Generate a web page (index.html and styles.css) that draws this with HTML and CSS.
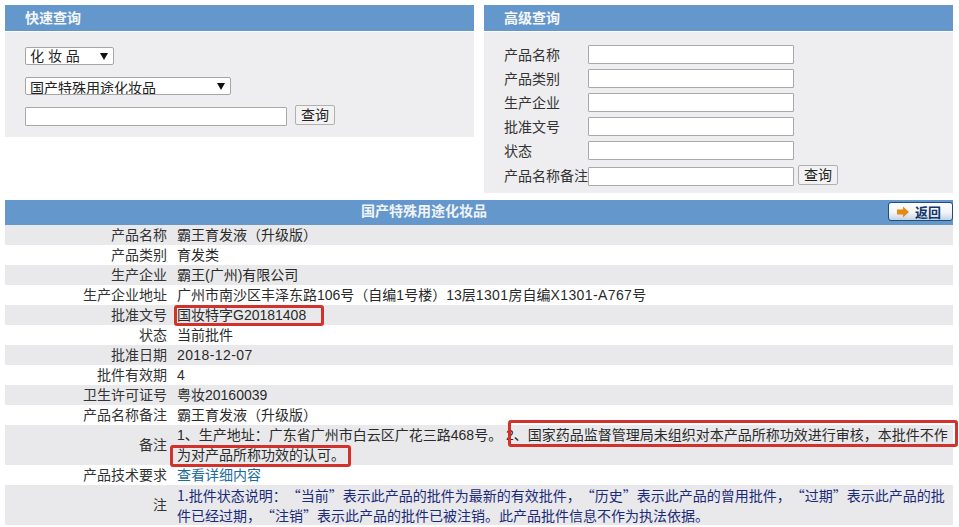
FILE: index.html
```html
<!DOCTYPE html>
<html lang="zh-CN">
  <head>
    <meta charset="UTF-8" />
    <title>国产特殊用途化妆品</title>
    <link rel="stylesheet" href="styles.css">
  </head>
  <body>
    <div class="search-panels">
      <div class="panel">
        <div class="panel-title">快速查询</div>
        <div class="panel-body quick">
          <div class="select-box small"><select><option>化 妆 品</option></select></div>
          <div class="select-box wide"><select><option>国产特殊用途化妆品</option></select></div>
          <div class="quick-row">
            <input type="text" class="text-input long" />
            <button type="button" class="query-btn">查询</button>
          </div>
        </div>
      </div>
      <div class="panel">
        <div class="panel-title">高级查询</div>
        <div class="panel-body advanced">
          <div class="form-row"><label>产品名称</label><input type="text" class="text-input" /></div>
          <div class="form-row"><label>产品类别</label><input type="text" class="text-input" /></div>
          <div class="form-row"><label>生产企业</label><input type="text" class="text-input" /></div>
          <div class="form-row"><label>批准文号</label><input type="text" class="text-input" /></div>
          <div class="form-row"><label>状态</label><input type="text" class="text-input" /></div>
          <div class="form-row last">
            <label>产品名称备注</label><input type="text" class="text-input" />
            <button type="button" class="query-btn">查询</button>
          </div>
        </div>
      </div>
    </div>

    <div class="detail-head">
      <div class="detail-title">国产特殊用途化妆品</div>
      <div class="detail-actions">
        <a class="back-btn">
          <svg width="12" height="12" viewBox="0 0 12 12">
            <path d="M0 3.500h6V0.500L12 6l-6 5.500V8.500H0z" fill="#e58a12" />
          </svg>
          返回
        </a>
      </div>
    </div>
    <table class="detail">
      <tr><th>产品名称</th><td>霸王育发液（升级版）</td></tr>
      <tr><th>产品类别</th><td>育发类</td></tr>
      <tr><th>生产企业</th><td>霸王(广州)有限公司</td></tr>
      <tr><th>生产企业地址</th><td>广州市南沙区丰泽东路106号（自编1号楼）13层<span class="digits">1301</span>房自编<span class="digits">X1301-A767</span>号</td></tr>
      <tr><th>批准文号</th><td>国妆特字G20181408</td></tr>
      <tr><th>状态</th><td>当前批件</td></tr>
      <tr><th>批准日期</th><td><span class="digits">2018-12-07</span></td></tr>
      <tr><th>批件有效期</th><td>4</td></tr>
      <tr><th>卫生许可证号</th><td>粤妆20160039</td></tr>
      <tr><th>产品名称备注</th><td>霸王育发液（升级版）</td></tr>
      <tr><th>备注</th><td>1、生产地址：广东省广州市白云区广花三路468号。 2、国家药品监督管理局未组织对本产品所称功效进行审核，本批件不作为对产品所称功效的认可。</td></tr>
      <tr><th>产品技术要求</th><td><a class="detail-link">查看详细内容</a></td></tr>
      <tr><th>注</th><td class="note">1.批件状态说明：“当前”表示此产品的批件为最新的有效批件，“历史”表示此产品的曾用批件，“过期”表示此产品的批件已经过期，“注销”表示此产品的批件已被注销。此产品批件信息不作为执法依据。</td></tr>
    </table>

    <div class="mark mark-number"></div>
    <div class="mark mark-note-a"></div>
    <div class="mark mark-note-b"></div>
  </body>
</html>
```

FILE: styles.css
```css
body {
  margin: 0;
  padding: 5px 6px 0 5px;
  background-color: #fff;
  color: #333;
  font-family: "Liberation Sans", "Noto Sans CJK SC", sans-serif;
  font-size: 14px;
  overflow: hidden;
}
.search-panels {
  display: grid;
  grid-template-columns: 469px 469px;
  gap: 10px;
  align-items: start;
}
.panel-title {
  height: 26px;
  line-height: 26px;
  padding-left: 20px;
  background-color: #6497cb;
  color: #f4f6f8;
  font-weight: bold;
}
.panel-body {
  margin-top: 1px;
  background-color: #eeedef;
  padding-left: 20px;
}
.quick {
  padding-top: 15px;
  padding-bottom: 11px;
}
.select-box {
  position: relative;
  height: 18px;
  margin-bottom: 12px;
}
.select-box.small {
  width: 89px;
}
.select-box.wide {
  width: 206px;
}
.select-box.wide select {
  padding-top: 2px;
}
.select-box::after {
  content: "";
  position: absolute;
  top: 6px;
  right: 6px;
  border-left: 4px solid transparent;
  border-right: 4px solid transparent;
  border-top: 7px solid #111;
}
.select-box select {
  appearance: none;
  display: block;
  box-sizing: border-box;
  width: 100%;
  height: 18px;
  padding: 0 0 0 4px;
  border: 1px solid #a6a6a6;
  border-radius: 2px;
  background-color: #fff;
  color: #222;
  font: inherit;
  line-height: 16px;
}
.quick-row {
  display: flex;
  margin-top: -2px;
  align-items: flex-start;
}
.text-input {
  box-sizing: border-box;
  width: 206px;
  height: 19px;
  padding: 0;
  border: 1px solid #a9a9a9;
  border-radius: 1px;
  background-color: #fff;
}
.text-input.long {
  width: 262px;
  margin-top: 2px;
}
.query-btn {
  box-sizing: border-box;
  width: 40px;
  height: 20px;
  margin-left: 8px;
  padding: 0;
  border: 1px solid #b0b0b0;
  border-radius: 2px;
  background-color: #f2f2f2;
  color: #222;
  font: inherit;
  line-height: 18px;
}
.advanced {
  height: 151px;
  padding-top: 10px;
}
.form-row {
  display: flex;
  align-items: center;
  height: 24px;
}
.form-row label {
  width: 84px;
  flex-shrink: 0;
  white-space: nowrap;
}
.form-row.last {
  height: 25px;
}
.form-row.last .text-input {
  margin-top: 3px;
}
.form-row.last .query-btn {
  margin-left: 4px;
}
.detail-head {
  display: flex;
  align-items: center;
  height: 25px;
  margin-top: 7px;
  background-color: #6497cb;
}
.detail-title {
  flex: 1;
  padding-bottom: 4px;
  line-height: 20px;
  text-align: center;
  color: #f0f3f7;
  font-weight: bold;
}
.detail-actions {
  display: flex;
  justify-content: flex-end;
  width: 110px;
}
.back-btn {
  box-sizing: border-box;
  display: flex;
  align-items: center;
  gap: 6px;
  width: 65px;
  height: 19px;
  margin-bottom: 2px;
  padding-left: 8px;
  border: 1px solid #1f4e79;
  border-radius: 3px;
  background: linear-gradient(#fbfcfd, #f2f5f8 55%, #c3d4e4);
  color: #12356b;
  font-size: 13px;
  font-weight: bold;
}
.detail {
  width: 948px;
  border-collapse: collapse;
  table-layout: fixed;
  line-height: 20px;
}
.detail tr:nth-child(odd) {
  background-color: #e9e9eb;
}
.detail th {
  width: 162px;
  padding: 0 5px 0 0;
  text-align: right;
  font-weight: normal;
}
.detail td {
  padding: 0 0 0 5px;
  color: #2a2a2a;
}
.digits {
  letter-spacing: 0.4px;
}
.detail-link {
  color: #1b6d9c;
}
.detail .note {
  color: #1b2a78;
  font-family: "Noto Sans CJK SC", sans-serif;
  text-spacing-trim: space-all;
}
.mark {
  position: absolute;
  box-sizing: border-box;
  border: 3px solid #d2322b;
  border-radius: 3px;
}
.mark-number {
  left: 174px;
  top: 305px;
  width: 150px;
  height: 21px;
}
.mark-note-a {
  left: 508px;
  top: 420px;
  width: 450px;
  height: 27px;
}
.mark-note-b {
  left: 170px;
  top: 445px;
  width: 181px;
  height: 22px;
}
```
